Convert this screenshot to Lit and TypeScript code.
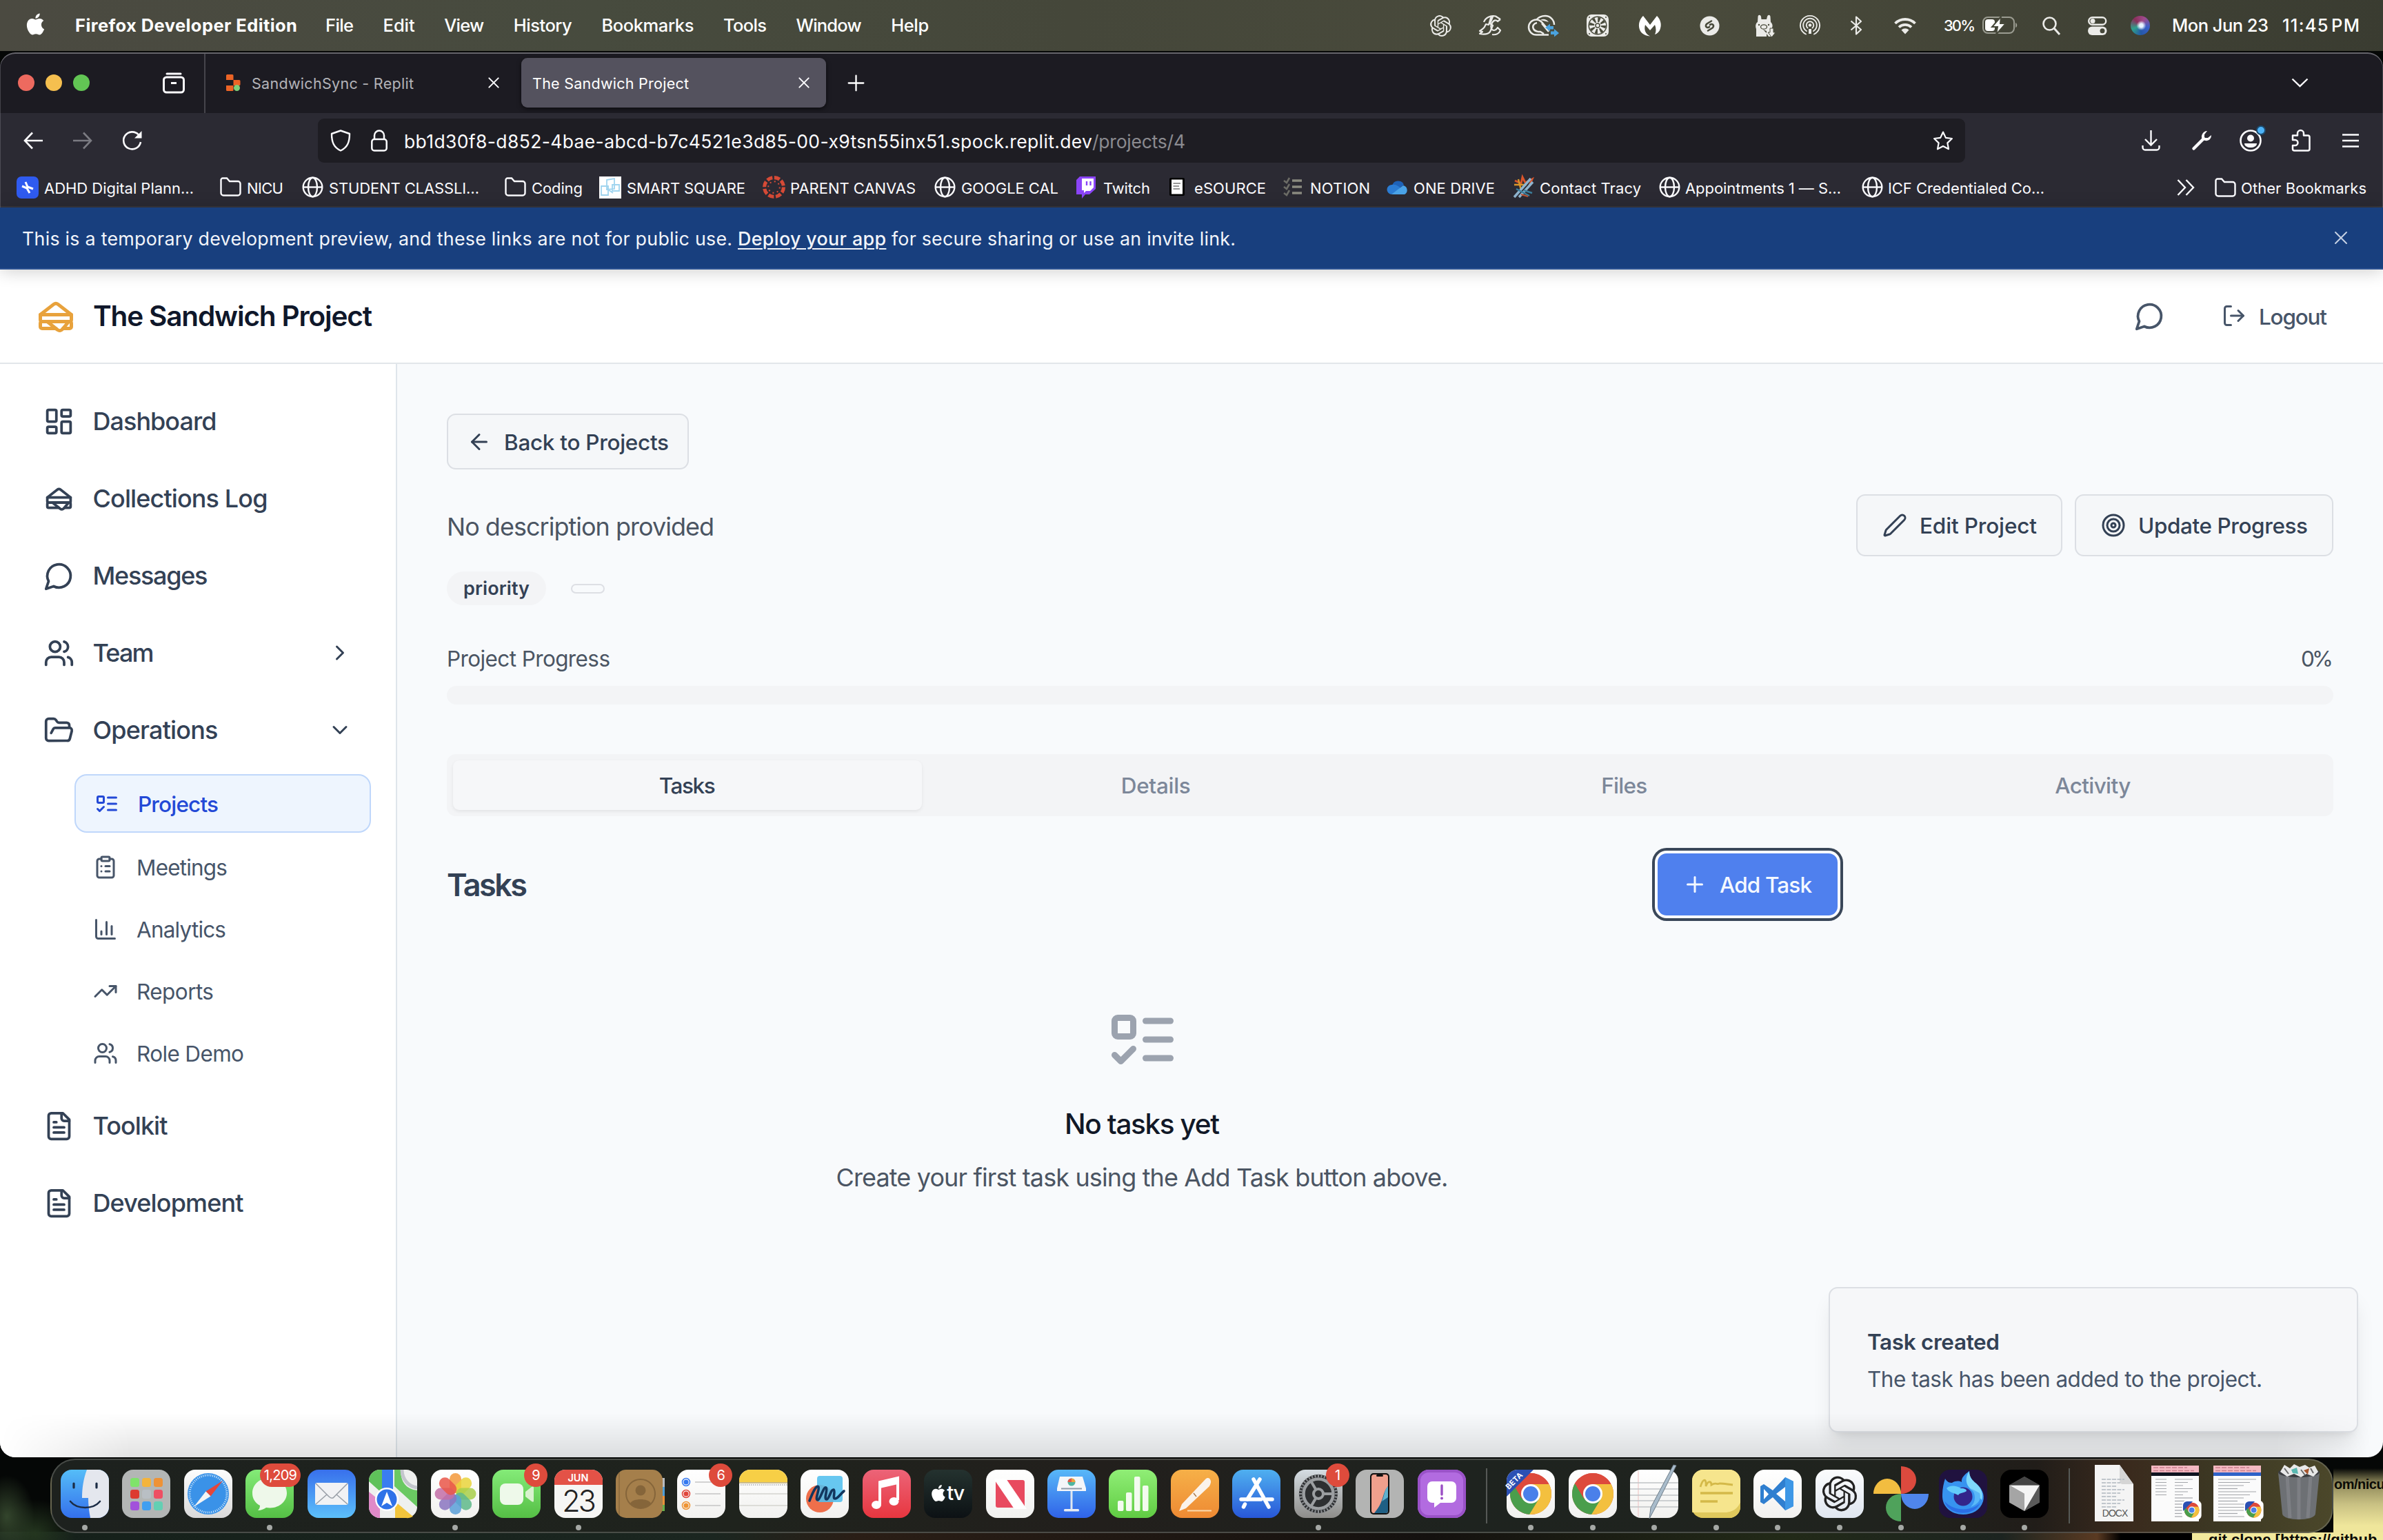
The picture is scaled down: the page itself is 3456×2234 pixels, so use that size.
import { LitElement, html, svg, css, nothing, type TemplateResult } from "lit";
import { customElement, property } from "lit/decorators.js";
import { styleMap } from "lit/directives/style-map.js";

/** One line of text whose tracking is adjusted so that it fills the given width. */
@customElement("fit-text")
class FitText extends LitElement {
  @property({ type: Number }) w = 0;
  @property() text = "";
  static styles = css`
    :host { display: inline-block; white-space: pre; flex: none; }
  `;
  render() {
    return html`<span>${this.text}</span>`;
  }
  updated() {
    const span = this.renderRoot.querySelector("span")!;
    this.style.width = `${this.w}px`;
    this.style.letterSpacing = "0px";
    const natural = span.getBoundingClientRect().width;
    const n = Math.max(1, this.text.length - 1);
    this.style.letterSpacing = `${((this.w - natural) / n).toFixed(3)}px`;
  }
}

const t = (text: string, w: number, cls = "") =>
  html`<fit-text class=${cls} .w=${w} .text=${text}></fit-text>`;

/* ---------- stroke icons ---------- */
const icon = (body: TemplateResult, size: number, cls = "", sw = 2) => html`
  <svg class="ic ${cls}" width=${size} height=${size} viewBox="0 0 24 24" fill="none"
    stroke="currentColor" stroke-width=${sw} stroke-linecap="round" stroke-linejoin="round">${body}</svg>`;

const I = {
  sandwich: svg`<path d="M3 11v3a1 1 0 0 0 1 1h16a1 1 0 0 0 1-1v-3"/><path d="M12 19H4a1 1 0 0 1-1-1v-2a1 1 0 0 1 1-1h16a1 1 0 0 1 1 1v2a1 1 0 0 1-1 1h-3.83"/><path d="m3 11 7.77-6.04a2 2 0 0 1 2.46 0L21 11H3Z"/><path d="M12.97 19.77 7 15h12.5l-3.75 4.5a2 2 0 0 1-2.78.27Z"/>`,
  dashboard: svg`<rect width="7" height="9" x="3" y="3" rx="1"/><rect width="7" height="5" x="14" y="3" rx="1"/><rect width="7" height="9" x="14" y="12" rx="1"/><rect width="7" height="5" x="3" y="16" rx="1"/>`,
  message: svg`<path d="M7.9 20A9 9 0 1 0 4 16.1L2 22Z"/>`,
  users: svg`<path d="M16 21v-2a4 4 0 0 0-4-4H6a4 4 0 0 0-4 4v2"/><circle cx="9" cy="7" r="4"/><path d="M22 21v-2a4 4 0 0 0-3-3.87"/><path d="M16 3.13a4 4 0 0 1 0 7.75"/>`,
  folderOpen: svg`<path d="m6 14 1.5-2.9A2 2 0 0 1 9.24 10H20a2 2 0 0 1 1.94 2.5l-1.54 6a2 2 0 0 1-1.95 1.5H4a2 2 0 0 1-2-2V5a2 2 0 0 1 2-2h3.9a2 2 0 0 1 1.69.9l.81 1.2a2 2 0 0 0 1.67.9H18a2 2 0 0 1 2 2v2"/>`,
  todo: svg`<rect x="3" y="5" width="6" height="6" rx="1"/><path d="m3 17 2 2 4-4"/><path d="M13 6h8"/><path d="M13 12h8"/><path d="M13 18h8"/>`,
  clipboard: svg`<rect width="8" height="4" x="8" y="2" rx="1"/><path d="M16 4h2a2 2 0 0 1 2 2v14a2 2 0 0 1-2 2H6a2 2 0 0 1-2-2V6a2 2 0 0 1 2-2h2"/><path d="M12 11h4"/><path d="M12 16h4"/><path d="M8 11h.01"/><path d="M8 16h.01"/>`,
  chart: svg`<path d="M3 3v16a2 2 0 0 0 2 2h16"/><path d="M18 17V9"/><path d="M13 17V5"/><path d="M8 17v-3"/>`,
  trend: svg`<polyline points="22 7 13.5 15.5 8.5 10.5 2 17"/><polyline points="16 7 22 7 22 13"/>`,
  file: svg`<path d="M15 2H6a2 2 0 0 0-2 2v16a2 2 0 0 0 2 2h12a2 2 0 0 0 2-2V7Z"/><path d="M14 2v4a2 2 0 0 0 2 2h4"/><path d="M10 9H8"/><path d="M16 13H8"/><path d="M16 17H8"/>`,
  logout: svg`<path d="M9 21H5a2 2 0 0 1-2-2V5a2 2 0 0 1 2-2h4"/><path d="m16 17 5-5-5-5"/><path d="M21 12H9"/>`,
  pen: svg`<path d="M21.174 6.812a1 1 0 0 0-3.986-3.987L3.842 16.174a2 2 0 0 0-.5.83l-1.321 4.352a.5.5 0 0 0 .623.622l4.353-1.32a2 2 0 0 0 .83-.497z"/>`,
  target: svg`<circle cx="12" cy="12" r="10"/><circle cx="12" cy="12" r="6"/><circle cx="12" cy="12" r="2"/>`,
  plus: svg`<path d="M5 12h14"/><path d="M12 5v14"/>`,
  left: svg`<path d="m12 19-7-7 7-7"/><path d="M19 12H5"/>`,
  chevRight: svg`<path d="m9 18 6-6-6-6"/>`,
  chevDown: svg`<path d="m6 9 6 6 6-6"/>`,
  close: svg`<path d="M4 4 20 20M20 4 4 20"/>`,
};

const box = (w: number, h: number, vb: string, body: TemplateResult, cls = "") =>
  html`<svg class="ic ${cls}" width=${w} height=${h} viewBox=${vb} fill="none">${body}</svg>`;

const OPENAI = "M22.2819 9.8211a5.9847 5.9847 0 0 0-.5157-4.9108 6.0462 6.0462 0 0 0-6.5098-2.9A6.0651 6.0651 0 0 0 4.9807 4.1818a5.9847 5.9847 0 0 0-3.9977 2.9 6.0462 6.0462 0 0 0 .7427 7.0966 5.98 5.98 0 0 0 .511 4.9107 6.051 6.051 0 0 0 6.5146 2.9001A5.9847 5.9847 0 0 0 13.2599 24a6.0557 6.0557 0 0 0 5.7718-4.2058 5.9894 5.9894 0 0 0 3.9977-2.9001 6.0557 6.0557 0 0 0-.7475-7.0729zm-9.022 12.6081a4.4755 4.4755 0 0 1-2.8764-1.0408l.1419-.0804 4.7783-2.7582a.7948.7948 0 0 0 .3927-.6813v-6.7369l2.02 1.1686a.071.071 0 0 1 .038.052v5.5826a4.504 4.504 0 0 1-4.4945 4.4944zm-9.6607-4.1254a4.4708 4.4708 0 0 1-.5346-3.0137l.142.0852 4.783 2.7582a.7712.7712 0 0 0 .7806 0l5.8428-3.3685v2.3324a.0804.0804 0 0 1-.0332.0615L9.74 19.9502a4.4992 4.4992 0 0 1-6.1408-1.6464zM2.3408 7.8956a4.485 4.485 0 0 1 2.3655-1.9728V11.6a.7664.7664 0 0 0 .3879.6765l5.8144 3.3543-2.0201 1.1685a.0757.0757 0 0 1-.071 0l-4.8303-2.7865A4.504 4.504 0 0 1 2.3408 7.872zm16.5963 3.8558L13.1038 8.364 15.1192 7.2a.0757.0757 0 0 1 .071 0l4.8303 2.7913a4.4944 4.4944 0 0 1-.6765 8.1042v-5.6772a.79.79 0 0 0-.407-.667zm2.0107-3.0231l-.142-.0852-4.7735-2.7818a.7759.7759 0 0 0-.7854 0L9.409 9.2297V6.8974a.0662.0662 0 0 1 .0284-.0615l4.8303-2.7866a4.4992 4.4992 0 0 1 6.6802 4.66zM8.3065 12.863l-2.02-1.1638a.0804.0804 0 0 1-.038-.0567V6.0742a4.4992 4.4992 0 0 1 7.3757-3.4537l-.142.0805L8.704 5.459a.7948.7948 0 0 0-.3927.6813zm1.0976-2.3654l2.602-1.4998 2.6069 1.4998v2.9994l-2.5974 1.4997-2.6067-1.4997Z";
const APPLE = "M12.152 6.896c-.948 0-2.415-1.078-3.96-1.04-2.04.027-3.91 1.183-4.961 3.014-2.117 3.675-.546 9.103 1.519 12.09 1.013 1.454 2.208 3.09 3.792 3.039 1.52-.065 2.09-.987 3.935-.987 1.831 0 2.35.987 3.96.948 1.637-.026 2.676-1.48 3.676-2.948 1.156-1.688 1.636-3.325 1.662-3.415-.039-.013-3.182-1.221-3.22-4.857-.026-3.04 2.48-4.494 2.597-4.559-1.429-2.09-3.623-2.324-4.39-2.376-2-.156-3.675 1.09-4.61 1.09zM15.53 3.83c.843-1.012 1.4-2.427 1.245-3.83-1.207.052-2.662.805-3.532 1.818-.78.896-1.454 2.338-1.273 3.714 1.338.104 2.715-.688 3.559-1.701";

/* ---------- menu bar ---------- */
const MENUS: [string, number][] = [
  ["File", 41], ["Edit", 46], ["View", 58], ["History", 85], ["Bookmarks", 134], ["Tools", 63], ["Window", 95], ["Help", 55],
];

const W = "#ebebe8";
/* [cell width, drawing] – each drawing sits at the left of its cell */
const STATUS: [number, TemplateResult][] = [
  [71, box(31, 31, "0 0 24 24", svg`<path d=${OPENAI} fill=${W}/>`)],
  [72, box(32, 30, "0 0 32 30", svg`<g stroke=${W} stroke-width="2.2" stroke-linejoin="round"><path d="M31 6 27 9C24 6 21 7 18 13C16 18 18 22 22 22C25 22 26 19 27 18L31 22C29 27 24 29 19 28M7 10C9 4 16 0 24 1.500L31 6"/><path d="M20 2 16 12 20 15 16 24C13 28 6 28 1 27L5 24 1 23C4 21 7 19 8 17L10 13 14 14 17 4Z"/></g>`)],
  [84, box(45, 32, "0 0 45 32", svg`<path d="M11 29.500A10.500 10.500 0 0 1 11 7.500C17 7.500 20 12 24 17L29 22M11 8C14 4 18 2 24 2A13 13 0 0 1 37 15M29 29.500H10M12 12C7 13 5 17 7 21C10 26 17 25 17 25L22 28M19 13 29 25" stroke=${W} stroke-width="2.500"/><path d="M17 8A9 9 0 0 1 29 11Z" fill=${W}/><path d="M24 19 31 13.500V17H36V21.500H31V24.500ZM44 27 37 32.500V29H32V24.500H37V21Z" fill="#4aa3df"/>`)],
  [76, box(32, 32, "0 0 32 32", svg`<rect width="32" height="32" rx="7" fill=${W}/><circle cx="16" cy="16" r="12.800" stroke="#484a3b" stroke-width="1.500"/><circle cx="16" cy="16" r="8.500" stroke="#484a3b" stroke-width="7" stroke-dasharray="3.100 3.577"/><circle cx="16" cy="16" r="3" stroke="#484a3b" stroke-width="1.500"/><g fill="#484a3b"><circle cx="4" cy="4" r="1"/><circle cx="28" cy="4" r="1"/><circle cx="4" cy="28" r="1"/><circle cx="28" cy="28" r="1"/></g>`)],
  [88, box(32, 31, "0 0 32 31", svg`<path d="M6 1 16 14 26 1C31 6 33 13 31 19C30 24 26 27 23 28C25 24 25 19 23 14L16 22 9 14C7 21 9 27 16 30.500C7 30 1 25 0 17C-.5 10 2 5 6 1Z" fill="#fff"/>`)],
  [81, box(29, 29, "0 0 29 29", svg`<circle cx="14.500" cy="14.500" r="14" fill=${W}/><path d="M17 7.500 10.500 11.500C6.500 15 11 18.500 14 16M12 21.500 18.500 17.500C22.500 14 18 10.500 15 13" stroke="#484a3b" stroke-width="2.600" stroke-linecap="round"/>`)],
  [64, box(29, 33, "0 0 29 33", svg`<path d="M1 32V21C-.5 17 0 13 3 11L3.500 3C4 0 7 0 8 3L8.500 7H16L17 3C18 0 21 0 21.500 3L22 11C25 14 25 17 24 19V32H19L16 28V24L11 22 16 27V32Z" fill=${W}/><ellipse cx="12" cy="18" rx="4.500" ry="3.200" stroke="#484a3b" stroke-width="1.300"/><circle cx="5" cy="15" r="1.200" fill="#484a3b"/><circle cx="19" cy="15" r="1.200" fill="#484a3b"/><path d="M21 20H26V26H29L23.500 33 18 26H21Z" fill=${W} stroke="#484a3b"/>`)],
  [73, box(30, 30, "0 0 30 30", svg`<g stroke=${W} stroke-width="1.900" stroke-linecap="round"><path d="M9 27.500A14 14 0 1 1 21 27.500M10 23A9.800 9.800 0 1 1 20 23M11.500 18.500A5.300 5.300 0 1 1 18.500 18.500"/></g><circle cx="15" cy="14.500" r="2.300" fill=${W}/><path d="M13 20H17V27H13Z" fill=${W}/>`)],
  [63, box(18, 28, "0 0 18 28", svg`<path d="M1.500 7.500 16 20 9 26.500V1.500L16 8 1.500 20.500" stroke=${W} stroke-width="2.200" stroke-linejoin="round"/>`)],
  [73, box(34, 25, "0 0 34 25", svg`<path d="M2.500 9A20.500 20.500 0 0 1 31.500 9M8 14.500A13 13 0 0 1 26 14.500" stroke=${W} stroke-width="3.800"/><path d="M11.500 18.500A8 8 0 0 1 22.500 18.500L17 24.500Z" fill=${W}/>`)],
];
const STATUS2: [number, TemplateResult][] = [
  [87, box(51, 26, "0 0 51 26", svg`<rect x="1" y="1" width="45" height="23" rx="7" stroke="#9b9c91" stroke-width="2"/><path d="M48 9C51 10 51 15 48 16Z" fill="#9b9c91"/><rect x="4" y="4" width="14" height="17" rx="4" fill="#fff"/><path d="M27 0 14 15H22L20 26 34 10H26Z" fill="#fff" stroke="#46483a" stroke-width="2"/>`)],
  [66, box(26, 27, "0 0 26 27", svg`<circle cx="10.500" cy="10.500" r="9" stroke=${W} stroke-width="2.600"/><path d="M17 17 25 26" stroke=${W} stroke-width="3"/>`)],
  [62, box(28, 27, "0 0 28 27", svg`<rect x="1.200" y="1.200" width="25" height="10.600" rx="5.300" stroke=${W} stroke-width="2.400"/><circle cx="7" cy="6.500" r="3.500" fill=${W}/><rect y="14.500" width="27.500" height="12.500" rx="6.200" fill=${W}/><circle cx="21" cy="20.700" r="3.500" fill="#46483a"/>`)],
  [60, html`<div class="siri"></div>`],
];

/* ---------- bookmarks ---------- */
const globe = box(31, 31, "0 0 31 31", svg`<g stroke="#fbfbfe" stroke-width="2.400"><circle cx="15.500" cy="15.500" r="13.800"/><ellipse cx="15.500" cy="15.500" rx="6.500" ry="13.800"/><path d="M2 15.500H29"/></g>`);
const folder = box(31, 28, "0 0 31 28", svg`<path d="M4 1.500H10L14 6H26A3.500 3.500 0 0 1 29.500 9.500V23A3.500 3.500 0 0 1 26 26.500H5A3.500 3.500 0 0 1 1.500 23V4A2.500 2.500 0 0 1 4 1.500Z" stroke="#fbfbfe" stroke-width="2.400"/>`);
const BOOKMARKS: [number, TemplateResult, string, number, number][] = [
  [295, box(32, 32, "0 0 32 32", svg`<rect width="32" height="32" rx="7" fill="#2f5bf0"/><path d="M13 8 16 15 24 18M8 14 15 17 19 24" stroke="#fff" stroke-width="3"/>`), "ADHD Digital Plann…", 217, 8],
  [119, folder, "NICU", 53, 8],
  [294, globe, "STUDENT CLASSLI…", 218, 8],
  [137, folder, "Coding", 74, 8],
  [237, box(32, 32, "0 0 32 32", svg`<rect width="32" height="32" fill="#fff"/><path d="M11 5 22 3V18L11 19ZM3 14H13V27H3ZM19 12H29V21H19ZM13 19 20 24" stroke="#9fd4ef" stroke-width="1.800"/>`), "SMART SQUARE", 172, 8],
  [249, box(33, 33, "0 0 32 32", svg`<circle cx="16" cy="16" r="13.500" stroke="#d64a36" stroke-width="5" stroke-dasharray="8 2.600"/><circle cx="16" cy="16" r="8" stroke="#d64a36" stroke-width="2" stroke-dasharray="2 4.280"/>`), "PARENT CANVAS", 182, 7],
  [206, globe, "GOOGLE CAL", 141, 8],
  [135, box(28, 32, "0 0 28 32", svg`<path d="M5 0H28V18L19 26H13L8 32V26H0V5Z" fill="#8b44f7"/><path d="M8 3H25V16L20 21H14L11 24V20H8Z" fill="#fff"/><path d="M15 7V13M20.500 7V13" stroke="#8b44f7" stroke-width="2.400"/>`), "Twitch", 68, 11],
  [165, box(22, 26, "0 0 22 26", svg`<rect width="22" height="26" rx="2" fill="#000"/><rect x="3" y="2.500" width="16" height="21" fill="#fff"/><path d="M5.500 8H16M5.500 12H14M5.500 16H15" stroke="#777" stroke-width="1.500"/>`), "eSOURCE", 104, 14],
  [150, box(28, 28, "0 0 28 28", svg`<path d="M13 5H27M13 14H27M13 23H27" stroke="#8b8b80" stroke-width="3.500"/><path d="M1 5 5 8 9 1M1 14 5 17 9 10M1 23 5 26 9 19" stroke="#6c6c66" stroke-width="2.600"/>`), "NOTION", 87, 11],
  [183, box(32, 22, "0 0 32 22", svg`<path d="M8 9A9 9 0 0 1 25 8L10 20Z" fill="#1e62b8"/><path d="M7 22A7 7 0 0 1 8 8C13 7 18 10 22 15Z" fill="#2b7cd3"/><path d="M7 22 24 9A7 7 0 0 1 26 22Z" fill="#4aa3e8"/>`), "ONE DRIVE", 118, 7],
  [212, box(31, 32, "0 0 31 32", svg`<path d="M3 6 12 10 14 1 18 9 28 4 24 13" stroke="#d9552b" stroke-width="3"/><path d="M2 12H20M8 4 12 20" stroke="#d9962b" stroke-width="2.500"/><path d="M2 30 26 3M9 30 29 8" stroke="#8fb4cf" stroke-width="3.500"/><path d="M5 18 24 28M16 20 28 24" stroke="#3d7f9c" stroke-width="2.500"/><path d="M12 26 22 29" stroke="#c25534" stroke-width="2"/>`), "Contact Tracy", 147, 8],
  [294, globe, "Appointments 1 — S…", 226, 7],
  [457, globe, "ICF Credentialed Co…", 227, 7],
];

/* ---------- sidebar ---------- */
const NAV_TOP: [keyof typeof I, string, number, string][] = [
  ["dashboard", "Dashboard", 180, ""],
  ["sandwich", "Collections Log", 254, ""],
  ["message", "Messages", 167, ""],
  ["users", "Team", 89, "chevRight"],
  ["folderOpen", "Operations", 182, "chevDown"],
];
const NAV_SUB: [keyof typeof I, string, number][] = [
  ["todo", "Projects", 117], ["clipboard", "Meetings", 132], ["chart", "Analytics", 130], ["trend", "Reports", 112], ["users", "Role Demo", 156],
];
const NAV_END: [keyof typeof I, string, number, string][] = [
  ["file", "Toolkit", 109, ""],
  ["file", "Development", 219, ""],
];

/* ---------- dock ---------- */
interface App { k: string; art?: TemplateResult; dot?: boolean; badge?: string; extra?: TemplateResult }
const art = (body: TemplateResult) => html`<svg class="art" width="70" height="70" viewBox="0 0 70 70" fill="none">${body}</svg>`;

const petals = ["#f39a3c", "#e9d43c", "#a9cf4b", "#5fb98a", "#5b9fd8", "#8a76c0", "#c46fa8", "#e9574a"];
const chrome = svg`<circle cx="35" cy="35" r="30" fill="#dd4a3c"/><path d="M35 35 9 20A30 30 0 0 0 34 65L48 43Z" fill="#4a9e4c"/><path d="M35 21H61.500A30 30 0 0 1 33 65L47 42Z" fill="#f3c03f"/><path d="M9 20A30 30 0 0 1 61.500 21H35L22 42Z" fill="#dd4a3c"/><circle cx="35" cy="35" r="14" fill="#fff"/><circle cx="35" cy="35" r="11" fill="#4a80ea"/>`;
const teeth = Array.from({ length: 36 }, (_, i) => i * 10);

const APPS_A: App[] = [
  { k: "finder", dot: true, art: svg`<path d="M38 0H54A16 16 0 0 1 70 16V54A16 16 0 0 1 54 70H43C41 60 40 50 40 41H31C31 27 33 13 38 0Z" fill="#e4e7ee"/><path d="M19 20V26M52 20V26" stroke="#1b2c45" stroke-width="3.200" stroke-linecap="round"/><path d="M14 46C24 58 47 58 57 46" stroke="#1b2c45" stroke-width="2.600" stroke-linecap="round"/>` },
  { k: "launchpad", art: svg`${["#7fe36a", "#f4b43c", "#ee9236", "#dc3b30", "#b9bfc4", "#ee4f63", "#a251db", "#3f9ff0", "#63cfb3"].map((c, i) => svg`<rect x=${12 + (i % 3) * 17} y=${12 + Math.floor(i / 3) * 17} width="13" height="13" rx="3.500" fill=${c}/>`)}` },
  { k: "safari", art: svg`<circle cx="35" cy="35" r="30" fill="#3a92e8"/><circle cx="35" cy="35" r="27" stroke="#d8ecfb" stroke-width="3" stroke-dasharray="1 1.830"/><path d="M56 16 38.500 38.500 31.500 31.500Z" fill="#e5463b"/><path d="M14 54 38.500 38.500 31.500 31.500Z" fill="#f4f4f4"/>` },
  { k: "messages", dot: true, badge: "1,209", art: svg`<path d="M35 12C20 12 10 22 10 34C10 42 14 48 21 52C21 55 20 57 18 59C23 59 27 57 30 55C48 58 60 46 60 34C60 21 49 12 35 12Z" fill="#eef8ea"/>` },
  { k: "mail", art: svg`<rect x="11" y="19" width="48" height="32" rx="3" fill="#f1f2f4"/><path d="M12 20 31 39C34 42 37 42 39 39L58 20M12 50 28 36M58 50 42 36" stroke="#9aa0a8" stroke-width="1.600"/>` },
  { k: "maps", art: svg`<rect width="70" height="70" rx="16" fill="#eef0ee"/><path d="M0 16A16 16 0 0 1 16 0H19V34L0 17Z" fill="#5fc15a"/><path d="M37 0H46C46 18 54 28 70 30V54L37 24Z" fill="#6ac962"/><path d="M19 0H35V36H19Z" fill="#3a7df0"/><path d="M0 32 16 45V70A16 16 0 0 1 0 54Z" fill="#e08ac8"/><path d="M38 70V46L64 68A16 16 0 0 1 54 70Z" fill="#f2c53c"/><path d="M48 0C48 14 58 25 70 26" stroke="#c3c6cc" stroke-width="5"/><circle cx="26" cy="43" r="17" fill="#fff"/><circle cx="26" cy="43" r="14.500" fill="#2f72e8"/><path d="M26 32 34 53 26 48 18 53Z" fill="#fff"/>` },
  { k: "white", dot: true, art: svg`${petals.map((c, i) => svg`<rect x="27" y="5" width="17" height="29" rx="8.500" fill=${c} fill-opacity=".86" transform=${`rotate(${i * 45} 35.500 35)`}/>`)}` },
  { k: "facetime", badge: "9", art: svg`<rect x="11" y="20" width="34" height="31" rx="8" fill="#eef9ea"/><path d="M48 32 57 25C59 24 60 24 60 26V45C60 47 59 47 57 46L48 39Z" fill="#d9f2cf"/>` },
  { k: "calendar", dot: true, art: svg`<path d="M0 22V16A16 16 0 0 1 16 0H54A16 16 0 0 1 70 16V22Z" fill="#e35247"/>`, extra: html`<div class="cal"><span class="mon">JUN</span><span class="day">23</span></div>` },
  { k: "contacts", art: svg`<path d="M66 12H71V25H66Z" fill="#b9bcc0"/><path d="M66 25H71V38H66Z" fill="#4f9fd8"/><path d="M66 38H71V51H66Z" fill="#e8913a"/><path d="M66 51H71V60H66Z" fill="#67b04b"/><rect width="68" height="70" rx="15" fill="#a57f4b"/><path d="M5 4V66" stroke="#8b6a3c" stroke-width="1.500"/><circle cx="36" cy="35" r="21" stroke="#85653a" stroke-width="2"/><circle cx="36" cy="30" r="7.500" fill="#85653a"/><path d="M21 49C24 41 48 41 51 49A21 21 0 0 1 21 49Z" fill="#85653a"/>` },
  { k: "white", badge: "6", art: svg`${["#3478f0", "#e0463b", "#ee9434"].map((c, i) => svg`<circle cx="13" cy=${18 + i * 17} r="5.500" stroke=${c} stroke-width="1.500"/><circle cx="13" cy=${18 + i * 17} r="3.600" fill=${c}/><path d=${`M26 ${18 + i * 17}H63`} stroke="#c5c5c5" stroke-width="1.500"/>`)}` },
  { k: "white", art: svg`<path d="M0 18V16A16 16 0 0 1 16 0H54A16 16 0 0 1 70 16V18Z" fill="#f7cf46"/><path d="M0 19H70" stroke="#b9a468" stroke-width="1.500"/><path d="M2 22H70" stroke="#aaa" stroke-width="1.500" stroke-dasharray="1.500 1.500"/><path d="M0 35H70M0 52H70" stroke="#d3d3cf" stroke-width="1.500"/>` },
  { k: "white", art: svg`<circle cx="28" cy="42" r="20" fill="#ee6f4b"/><rect x="24" y="9" width="37" height="38" rx="4" fill="#52bfee" fill-opacity=".88"/><path d="M13 45C18 32 23 22 26 25C28 28 20 44 25 44C29 43 33 24 37 26C40 28 33 43 38 43C42 42 44 28 48 29C51 31 46 42 50 42C54 42 57 36 63 31" stroke="#12365e" stroke-width="3.600" stroke-linecap="round"/>` },
  { k: "music", art: svg`<path d="M25 50V18L51 12V44" stroke="#fff" stroke-width="4"/><path d="M25 18 51 12V21L25 27Z" fill="#fff"/><ellipse cx="20" cy="51" rx="7" ry="6" fill="#fff"/><ellipse cx="45.500" cy="46" rx="7" ry="6" fill="#fff"/>` },
  { k: "tv", art: svg`<path d=${APPLE} fill="#fff" transform="translate(9 22) scale(1)"/>`, extra: html`<span class="tvt">tv</span>` },
  { k: "white", art: svg`<rect x="14" y="15" width="42" height="40" rx="3" fill="#e84a5f"/><path d="M11 13H29L59 57H41Z" fill="#fff"/>` },
  { k: "keynote", art: svg`<path d="M18 10H51L56 27V31H14V27Z" fill="#f4f6f9"/><path d="M20 27.500H50" stroke="#8e9aa8" stroke-width="2"/><circle cx="35" cy="18" r="5.500" fill="#4fb6a0"/><path d="M35 18V12.500A5.500 5.500 0 0 1 40.500 18Z" fill="#f0a13c"/><path d="M35 18H29.500A5.500 5.500 0 0 1 35 12.500Z" fill="#e2574b"/><path d="M35 31V59" stroke="#dfe7f0" stroke-width="3"/><rect x="24" y="57" width="22" height="3.500" rx="1.500" fill="#e8edf3"/>` },
  { k: "numbers", art: svg`<g fill="#f3fbef"><rect x="13" y="45" width="8.500" height="15" rx="2"/><rect x="25" y="33" width="8.500" height="27" rx="2"/><rect x="37" y="10" width="8.500" height="50" rx="2"/><rect x="49" y="23" width="8.500" height="37" rx="2"/></g>` },
  { k: "pages", art: svg`<path d="M57 14C59 17 58 20 56 24L22 56 12 60 16 50 50 14C53 11 56 12 57 14Z" fill="#fbf3ea"/><path d="M33 34 37 39" stroke="#a87a4d" stroke-width="1.500"/><path d="M24 59.500H59" stroke="#f9d9ae" stroke-width="2"/>` },
  { k: "store", art: svg`<g stroke="#fff" stroke-width="5.500" stroke-linecap="round"><path d="M31 14 53 54"/><path d="M40 14 22 43"/><path d="M13 43H42M50 43H58"/><path d="M18.500 50 16.500 54"/></g>` },
  { k: "settings", dot: true, badge: "1", art: svg`<circle cx="35" cy="35" r="28" fill="#2d2f31"/>${teeth.map((a) => svg`<path d="M35 6.500V11" stroke="#8d9094" stroke-width="2" transform=${`rotate(${a} 35 35)`}/>`)}<circle cx="35" cy="35" r="21.500" stroke="#9b9ea1" stroke-width="4.500"/><circle cx="35" cy="35" r="7" stroke="#9b9ea1" stroke-width="4"/><path d="M42 35H56M31.500 29 24.500 17M31.500 41 24.500 53" stroke="#9b9ea1" stroke-width="4"/>` },
  { k: "mirror", art: svg`<rect x="21" y="5" width="28" height="60" rx="5" fill="#111"/><rect x="23" y="7" width="24" height="56" rx="3.500" fill="#f0a08d"/><path d="M47 24C38 34 42 46 27 63H43.500A3.500 3.500 0 0 0 47 59.500Z" fill="#1f5f84"/><path d="M47 24C41 30 42 38 38 46L47 40Z" fill="#5fb2cf"/><rect x="30" y="7" width="10" height="3" rx="1.500" fill="#111"/>` },
  { k: "feedback", art: svg`<path d="M21 17H49A7 7 0 0 1 56 24V41A7 7 0 0 1 49 48H33L24 55V48H21A7 7 0 0 1 14 41V24A7 7 0 0 1 21 17Z" fill="#fff"/><path d="M35 23V36" stroke="#9a4fc4" stroke-width="3.400" stroke-linecap="round"/><circle cx="35" cy="41.500" r="2" fill="#9a4fc4"/>` },
];
const APPS_B: App[] = [
  { k: "white", dot: true, art: svg`${chrome}<path d="M16 0H39L0 39V16A16 16 0 0 1 16 0Z" fill="#2b50b4"/>`, extra: html`<span class="beta">BETA</span>` },
  { k: "white", dot: true, art: chrome },
  { k: "white", dot: true, art: svg`<path d="M12 2V68" stroke="#f0c9c9" stroke-width="1.200"/><path d="M0 19H70M0 28H70M0 37H70M0 45H70M0 54H70" stroke="#c0c3c6" stroke-width="1.300"/><path d="M63-7 67-6 35 58 28 71 30 55Z" fill="#a9bccb" stroke="#6d7c88" stroke-width="1"/>` },
  { k: "stickies", dot: true, art: svg`<path d="M0 16A16 16 0 0 1 16 0H54A16 16 0 0 1 70 16V48C66 56 60 61 50 62H0Z" fill="#f6e58d"/><path d="M0 58V62H50C60 61 66 56 70 48V54A16 16 0 0 1 54 70H16A16 16 0 0 1 0 58Z" fill="#dfc85c"/><path d="M12 25C16 12 21 12 20 24C24 14 28 18 28 22C34 18 36 22 40 20C46 20 50 21 59 22" stroke="#d4b949" stroke-width="2.800"/><path d="M12 34H59M12 46H37" stroke="#d4b949" stroke-width="3.500"/>` },
  { k: "white", dot: true, art: svg`<path d="M46 11 58 17V53L46 59 28 40 15 50 10 47V24L15 21 28 30Z" fill="#2f7fd0"/><path d="M46 11 58 17V53L46 59Z" fill="#3d97e6"/><path d="M46 25V46L33 35Z" fill="#fff"/><path d="M15 28V43L22 35.500Z" fill="#fff"/>` },
  { k: "gpt", dot: true, art: svg`<path d=${OPENAI} fill="#222" transform="translate(9.500 9.500) scale(2.120)"/>` },
  { k: "bare", dot: true, art: svg`<path d="M35 35V-5A22 20 0 0 1 35 35Z" fill="#dc4a3e"/><path d="M35 35H-5A20 22 0 0 1 35 35Z" fill="#f2bd40"/><path d="M35 35H75A20 22 0 0 1 35 35Z" fill="#4f86ec"/><path d="M35 35V75A22 20 0 0 1 35 35Z" fill="#4fa25b"/>` },
  { k: "fox", dot: true, art: svg`<path d="M9 13C12 18 15 19 19 19C24 16 29 16 33 18C32 12 37 7 44 2C44 11 48 15 54 20C62 27 67 36 64 46C60 59 48 65 35 65C18 65 4 54 5 36C5 27 7 19 9 13Z" fill="#3793f0"/><path d="M44 2C44 11 48 15 54 20C61 26 65 35 62 44C57 38 52 33 46 28C39 22 37 12 44 2Z" fill="#7fd9fb"/><circle cx="35" cy="39" r="13.500" fill="#33258a"/><path d="M11 27C17 22 25 23 32 27C38 27 40 29 40 31C36 34 30 33 28 37C23 34 14 33 11 27Z" fill="#63cbfb"/><path d="M46 27C54 34 54 47 46 54C58 50 62 42 59 34Z" fill="#5ab8f8"/><path d="M8 46C14 66 50 70 60 48C48 60 24 62 8 46Z" fill="#2b6ee6"/>` },
  { k: "cursor", dot: true, art: svg`<path d="M35 10 57 22.500V47.500L35 60 13 47.500V22.500Z" fill="#777"/><path d="M13 22.500H57L35 60V35Z" fill="#f5f5f5"/><path d="M35 10 57 22.500H13Z" fill="#444"/><path d="M13 22.500 35 35V60L13 47.500Z" fill="#a5a5a5"/><path d="M57 22.500 35 60 57 47.500Z" fill="#5a5a5a"/>` },
];
const thumb = (dark: boolean) => svg`<rect x="0" y="-6" width="69" height="81" fill="#fbfbfb"/><rect x="0" y="-6" width="69" height="10" fill="#f4b9c2"/><path d="M3 -3H52M3 1.500H62" stroke="#c9808e" stroke-width="1.600" stroke-dasharray="7 2"/><rect x="0" y="4" width="69" height="5" fill=${dark ? "#0f1320" : "#2f62c8"}/>${Array.from({ length: 13 }, (_, i) => svg`<path d=${dark ? `M34 ${14 + i * 4.500}H${60 - (i % 3) * 7}M6 ${14 + i * 4.500}H${i < 6 ? 22 : 6}` : `M7 ${14 + i * 4.500}H${62 - (i % 4) * 9}`} stroke="#a3a6aa" stroke-width="1.200"/>`)}<g transform="translate(46 46) scale(.36)"><rect x="-4" y="-4" width="78" height="78" rx="18" fill="#fff"/>${chrome}<path d="M16 0H39L0 39V16A16 16 0 0 1 16 0Z" fill="#2b50b4"/></g>`;
const APPS_C: App[] = [
  { k: "bare", art: svg`<path d="M7-7H43L63 21V75H7Z" fill="#f4f4f4"/><path d="M43-7 63 21H48C44 21 43 19 43 14Z" fill="#d5d5d5"/>${Array.from({ length: 9 }, (_, i) => svg`<path d=${`M17 ${14 + i * 5}H${50 - (i % 3) * 6}`} stroke="#aeb6bf" stroke-width="1.500" stroke-dasharray="6 1.500"/>`)}`, extra: html`<span class="docx">DOCX</span>` },
  { k: "bare", art: thumb(true) },
  { k: "bare", art: thumb(false) },
  { k: "bare", art: svg`<path d="M5 4 11 64C12 75 58 75 59 64L65 4Z" fill="#6d7074"/><path d="M18 8 22 70M35 9V72M52 8 48 70" stroke="#8a8d91" stroke-width="5" opacity=".55"/><ellipse cx="35" cy="4" rx="30" ry="7" fill="#3c3e41"/><path d="M8 3 14-7 22-2 28-8 36-4 44-7 50-3 58-6 63 3 56 10 46 6 38 11 28 6 18 10Z" fill="#e8e8e8"/><path d="M24 0 32-3 34 6 26 5Z" fill="#58b7b0"/><path d="M42 1 50-2 48 7Z" fill="#a5552d"/><path d="M14-2 20 6M38 0 44 8M52-2 56 5" stroke="#6a6a6a" stroke-width="2"/>` },
];

const app = (a: App) => html`
  <div class="cell">
    <div class="tile ${a.k}">
      ${a.art ? art(a.art) : nothing}${a.extra ?? nothing}
      ${a.badge ? html`<span class="badge">${a.badge}</span>` : nothing}
    </div>
    <i class="dot ${a.dot ? "on" : ""}"></i>
  </div>`;

@customElement("app-root")
class AppRoot extends LitElement {
  static styles = css`
    :host {
      display: flex; flex-direction: column; width: 3456px; height: 2234px; overflow: hidden; position: relative;
      font-family: Inter, "Liberation Sans", sans-serif; color: #fff;
      background:
        radial-gradient(ellipse 40px 60px at 10px 2200px, #33452c 0, transparent 100%),
        radial-gradient(ellipse 60px 50px at 50px 2225px, #24361f 0, transparent 100%),
        linear-gradient(90deg, #15201a 0, #1b2620 30%, #2a1e16 36%, #14110f 60%, #222a18 75%, #1c2420 84%, #5a3a22 88%, #000 89%) 0 2222px / 3456px 12px no-repeat,
        #050706;
    }
    .ic { flex: none; display: block; overflow: visible; }
    fit-text { line-height: 1.2; padding-top: 2px; }

    /* menu bar */
    .menubar { height: 74px; flex: none; display: flex; align-items: center; font-size: 25.500px; font-weight: 500;
      background: linear-gradient(90deg, #4b4a41 0, #474b3e 25%, #45473a 45%, #4a4b3c 70%, #3a3c31 100%); box-sizing: border-box; }
    .menubar fit-text { padding-top: 0; }
    .apple { margin: 0 42px 4px 36px; }
    .appname { font-weight: 700; margin-right: 41px; }
    .menus { display: flex; gap: 42.600px; flex: 1; }
    .status { display: flex; align-items: center; }
    .scell { flex: none; display: flex; align-items: center; }
    .pct { font-size: 22px; margin-right: 10px; }
    .siri { width: 28px; height: 28px; border-radius: 50%; background: radial-gradient(circle at 55% 50%, #e8f4ff 0 12%, transparent 34%), conic-gradient(from 30deg, #a04a8c, #3a5fc8, #2458a8, #2fa08c, #8a2f5a, #a04a8c); }
    .clock { margin-right: 34px; display: flex; gap: 20px; }

    /* window */
    .window { margin-top: 2px; height: 2038px; flex: none; border-radius: 22px; overflow: hidden; display: flex; flex-direction: column; position: relative; background: #1c1b22; }
    .window::after { content: ""; position: absolute; inset: 0; border-radius: 22px; pointer-events: none;
      box-shadow: inset 0 2px 0 #66656c, inset 1px 0 0 rgba(140, 140, 150, .35), inset -1px 0 0 rgba(140, 140, 150, .35); height: 315px; border-bottom-left-radius: 0; border-bottom-right-radius: 0; }
    .tabs { height: 88px; flex: none; display: flex; align-items: center; font-size: 21.500px; }
    .tabs fit-text, .marks fit-text { padding-top: 3px; }
    .lights { display: flex; gap: 16px; margin-left: 26px; width: 210px; }
    .lights i { width: 24px; height: 24px; border-radius: 50%; }
    .red { background: #ed6a5f; } .amber { background: #f5bf4f; } .green { background: #62c554; }
    .view { margin-left: 0; }
    .sep { width: 2px; height: 88px; background: #46454c; margin-left: 28px; }
    .tab { width: 442px; height: 72px; display: flex; align-items: center; box-sizing: border-box; border-radius: 9px; flex: none; }
    .tab.idle { color: #b3b3b8; margin-left: 8px; padding-left: 22px; margin-right: 8px; }
    .tab.idle .ic.fav { margin-right: 16px; }
    .tab.on { background: #54525e; padding-left: 16px; box-shadow: 0 2px 6px rgba(0, 0, 0, .6); }
    .tab .x { margin-left: auto; margin-right: 22px; color: #fbfbfe; }
    .newtab { margin-left: 25px; }
    .tabs .more { margin-left: auto; margin-right: 108px; }
    .chrome { background: #2b2a33; height: 137px; flex: none; display: flex; flex-direction: column; box-sizing: border-box; border-bottom: 2px solid #37363c; }
    .bar { height: 80px; flex: none; display: flex; align-items: center; }
    .url { width: 2389px; height: 64px; flex: none; border-radius: 9px; background: #1e1d23; display: flex; align-items: center; box-sizing: border-box; font-size: 26.500px; color: #fbfbfe; }
    .url fit-text { padding-top: 3px; }
    .url .path { color: #8b8b90; }
    .url .star { margin-left: auto; margin-right: 16px; }
    .navs { display: flex; align-items: center; width: 461px; flex: none; box-sizing: border-box; padding-left: 34px; }
    .tools { display: flex; align-items: center; flex: 1; justify-content: flex-end; padding-right: 34px; }
    .marks { display: flex; align-items: center; height: 59px; padding-left: 24px; font-size: 22px; color: #fbfbfe; }
    .mark { flex: none; display: flex; align-items: center; }
    .other { margin-left: 29px; margin-right: 7px; }

    /* preview banner */
    .banner { height: 90px; flex: none; box-sizing: border-box; background: #183f7e; border-bottom: 2px solid #2c5292; display: flex; align-items: center; padding: 0 49px 0 32px; font-size: 26.800px; color: #f2f5fa; justify-content: space-between; position: relative; z-index: 1; box-shadow: 0 2px 24px rgba(0, 0, 0, .2); }
    .banner .msg { display: flex; }
    .banner .link { text-decoration: underline; text-underline-offset: 4px; text-decoration-thickness: 2px; font-weight: 500; margin: 0 8px; }
    .banner .ic { color: #c6d1e3; }

    /* page */
    .top { height: 137px; flex: none; box-sizing: border-box; background: #fff; border-bottom: 2px solid #e2e6ea; display: flex; align-items: center; padding: 0 81px 0 51px; color: #475569; }
    .top .logo { color: #e8a23c; margin-right: 24px; }
    .top .title { color: #0f172a; font-weight: 600; font-size: 40.500px; flex: 1 0 auto; }
    .top .out { display: flex; align-items: center; font-size: 31.500px; font-weight: 500; margin-left: 82px; gap: 18px; }
    .page { display: flex; flex: 1; background: #f8fafc; min-height: 0; }
    .side { width: 576px; flex: none; box-sizing: border-box; background: #fff; border-right: 2px solid #dfe5eb; padding-top: 27px; color: #334155; }
    .nav { height: 112px; display: flex; align-items: center; padding-left: 63px; font-size: 36px; font-weight: 500; }
    .nav .ic.lead { margin-right: 26.500px; }
    .nav .ic.chev { margin-left: auto; margin-right: 63px; }
    .sub { padding: 8px 36px 4px 108px; }
    .snav { height: 90px; display: flex; align-items: center; padding-left: 27px; color: #475569; font-size: 31.500px; }
    .snav .ic { margin-right: 27px; }
    .snav.on { height: 85px; box-sizing: border-box; border: 2px solid #bfd7fb; border-radius: 18px; background: #eef5fe; color: #2349d6; margin-bottom: 5px; font-weight: 500; }

    .main { flex: 1; padding: 72px 72px 0 72px; color: #374151; display: flex; flex-direction: column; }
    .btn { display: flex; align-items: center; box-sizing: border-box; border: 2px solid #dcdfe4; border-radius: 13px; background: #f5f7f9; height: 90px; font-size: 31.500px; font-weight: 500; color: #334155; flex: none; }
    .btn.back { width: 351px; height: 81px; padding-left: 27px; gap: 18px; }
    .btn.edit { width: 299px; padding-left: 36px; gap: 18px; }
    .btn.update { width: 375px; padding-left: 36px; gap: 18px; }
    .head { display: flex; justify-content: space-between; align-items: flex-start; margin-top: 36px; }
    .desc { font-size: 36px; color: #4b5563; height: 54px; display: flex; align-items: center; margin-top: 20px; }
    .acts { display: flex; gap: 18px; }
    .pills { display: flex; align-items: center; gap: 36px; margin-top: 38px; height: 49px; }
    .pill { height: 49px; width: 144px; display: flex; align-items: center; justify-content: center; border-radius: 25px; background: #f3f4f6; font-size: 27px; font-weight: 600; color: #334155; }
    .pill.empty { width: 49px; height: 14px; box-sizing: border-box; border: 2px solid #dddfe4; background: none; border-radius: 7px; }
    .prow { display: flex; justify-content: space-between; align-items: center; height: 45px; margin-top: 54px; font-size: 31.500px; color: #4b5563; }
    .track { height: 27px; border-radius: 14px; background: #f3f4f6; margin-top: 18px; flex: none; }
    .tablist { height: 90px; flex: none; box-sizing: border-box; padding: 9px; display: grid; grid-template-columns: repeat(4, 1fr); background: #f3f4f6; border-radius: 13px; margin-top: 72px; font-size: 31.500px; font-weight: 500; color: #7c8799; }
    .tl { display: flex; align-items: center; justify-content: center; border-radius: 9px; }
    .tl.on { background: #f6f7f9; color: #334155; box-shadow: 0 2px 5px rgba(0, 0, 0, .07); }
    .tasks { width: 2017px; display: flex; justify-content: space-between; align-items: center; height: 90px; margin-top: 54px; flex: none; }
    .tasks .h { font-size: 45px; font-weight: 600; color: #334155; }
    .add { width: 261px; height: 90px; box-sizing: border-box; border-radius: 13px; background: #4f80ee; color: #f4f8ff; font-size: 31.500px; font-weight: 500; display: flex; align-items: center; padding-left: 36px; gap: 18px; box-shadow: 0 0 0 4px #fdfdfe, 0 0 0 8px #3a4759; }
    .empty-state { width: 2017px; display: flex; flex-direction: column; align-items: center; padding-top: 126px; }
    .empty-state .ic { color: #9ca3af; }
    .empty-state .t1 { font-size: 40.500px; font-weight: 500; color: #111827; height: 63px; margin-top: 37px; display: flex; align-items: center; }
    .empty-state .t2 { font-size: 36px; color: #4b5563; height: 54px; margin-top: 19px; display: flex; align-items: center; }

    .toast { position: absolute; right: 36px; bottom: 36px; width: 768px; height: 211px; box-sizing: border-box; border: 2px solid #dcdfe4; border-radius: 13px; background: #f6f7f9; padding: 0 0 0 54px; display: flex; flex-direction: column; justify-content: center; gap: 14px; font-size: 31.500px; color: #475569; box-shadow: 0 20px 30px -6px rgba(0, 0, 0, .1), 0 8px 12px -8px rgba(0, 0, 0, .1); }
    .toast .tt { font-weight: 600; color: #334155; }
    .dockshade { position: absolute; left: 0; right: 0; bottom: 0; height: 64px; pointer-events: none;
      background: linear-gradient(180deg, transparent, rgba(0, 0, 0, .115)); -webkit-mask-image: linear-gradient(90deg, transparent 0, #000 190px, #000 3300px, transparent 3440px); mask-image: linear-gradient(90deg, transparent 0, #000 190px, #000 3300px, transparent 3440px); }

    /* desktop note behind the dock */
    .note { position: absolute; left: 3384px; top: 2130px; width: 72px; height: 104px; overflow: hidden; background: linear-gradient(180deg, transparent 0, #8d8759 20%, #c9c183 50%, #efe69b 80%); color: #0b0b06; font: 700 20px/1 "Liberation Sans", sans-serif; }
    .note span { position: absolute; left: 1px; top: 13px; white-space: nowrap; letter-spacing: -.5px; }
    .note2 { position: absolute; left: 3179px; top: 2223px; width: 277px; height: 11px; overflow: hidden; background: #f1e89c; color: #0b0b06; font: 700 22px/1 "Liberation Sans", sans-serif; }
    .note2 span { position: absolute; left: 24px; top: 0; white-space: nowrap; }

    /* dock */
    .dock { width: 3311px; height: 108px; flex: none; margin: 2px 0 0 73px; box-sizing: border-box; border-radius: 36px; position: relative;
      background: linear-gradient(90deg, #1d211e 0, #1f231d 30%, #221f1c 46%, #1e231f 62%, #20231e 80%, #211d19 87%, #3a2a1d 91%, #3c3823 95%, #4b472a 100%);
      border: 2px solid rgba(150, 152, 148, .36); display: flex; padding-left: 3.300px; }
    .cell { width: 89.450px; flex: none; display: flex; flex-direction: column; align-items: center; padding-top: 14px; }
    .tile { width: 70px; height: 70px; border-radius: 16px; position: relative; }
    .art { position: absolute; inset: 0; overflow: visible; }
    .dot { width: 8px; height: 8px; border-radius: 50%; margin-top: 10px; }
    .dot.on { background: #a5a8a5; }
    .dsep { width: 2px; height: 80px; margin: 12px 19.200px 0; background: #565956; flex: none; }
    .badge { position: absolute; right: -10px; top: -9px; height: 34px; min-width: 34px; padding: 0 6px; box-sizing: border-box; border-radius: 17px; background: #de4b3c; color: #fff; font-size: 20px; line-height: 34px; text-align: center; letter-spacing: -.7px; }
    .finder { background: linear-gradient(180deg, #55bdf8, #3470ec); }
    .launchpad { background: #b3b6b5; }
    .safari { background: linear-gradient(180deg, #fdfdfd, #d9d9d9); }
    .messages, .facetime { background: linear-gradient(180deg, #84eb78, #55bf45); }
    .mail { background: linear-gradient(180deg, #3870ec, #5cc0fa); }
    .white { background: linear-gradient(180deg, #fff, #f1f1ef); }
    .calendar { background: #f6f6f4; }
    .music { background: linear-gradient(180deg, #ec6478, #e8363f); }
    .tv { background: linear-gradient(180deg, #24322f, #0c1114); }
    .keynote { background: linear-gradient(180deg, #58b8f8, #2f62e8); }
    .numbers { background: linear-gradient(180deg, #90ee76, #60cc43); }
    .pages { background: linear-gradient(180deg, #f6b048, #ee8a33); }
    .store { background: linear-gradient(180deg, #4fb0f0, #2857d8); }
    .settings { background: linear-gradient(180deg, #d5dde3, #8e8d8a); }
    .mirror { background: #b3b4b3; }
    .feedback { background: #b26be0; box-shadow: inset 0 0 0 4px #9a52c8; }
    .stickies { background: #dfc85c; }
    .gpt { background: linear-gradient(180deg, #fbfcfd, #dfe6ef); }
    .fox { background: #20123f; }
    .cursor { background: #000; }
    .cal { position: absolute; inset: 0; display: flex; flex-direction: column; align-items: center; }
    .mon { font-size: 14.500px; font-weight: 600; line-height: 23px; color: #fff; }
    .day { font-size: 43px; font-weight: 300; line-height: 44px; color: #222; letter-spacing: -3px; }
    .tvt { position: absolute; left: 33px; top: 17px; font-size: 29px; font-weight: 500; line-height: 34px; letter-spacing: -1px; }
    .beta { position: absolute; left: -4px; top: 9px; font-size: 11px; font-weight: 700; line-height: 14px; transform: rotate(-45deg); letter-spacing: .3px; }
    .docx { position: absolute; left: 18px; top: 55px; font: 400 14px/16px "Liberation Sans", sans-serif; color: #555; letter-spacing: -1px; }
  `;

  private cells(items: [number, TemplateResult][]) {
    return items.map(([w, b]) => html`<div class="scell" style=${styleMap({ width: `${w}px` })}>${b}</div>`);
  }

  render() {
    return html`
      <div class="note"><span>om/nicu</span></div>
      <div class="note2"><span>git clone [https://github</span></div>
      <div class="menubar">
        ${box(31, 32, "0 0 24 24", svg`<path d=${APPLE} fill="#fff"/>`, "apple")}
        ${t("Firefox Developer Edition", 322, "appname")}
        <div class="menus">${MENUS.map(([m, w]) => t(m, w))}</div>
        <div class="status">
          ${this.cells(STATUS)}
          ${t("30%", 46, "pct")}
          ${this.cells(STATUS2)}
        </div>
        <div class="clock">${t("Mon Jun 23", 140)}${t("11:45\u200aPM", 112)}</div>
      </div>

      <div class="window">
        <div class="tabs">
          <div class="lights"><i class="red"></i><i class="amber"></i><i class="green"></i></div>
          ${box(32, 32, "0 0 32 32", svg`<path d="M6 3H26" stroke="#fbfbfe" stroke-width="3" stroke-linecap="round"/><rect x="1.500" y="8" width="29" height="22" rx="4" stroke="#fbfbfe" stroke-width="3"/><rect x="12" y="15" width="8" height="3" fill="#fbfbfe"/>`, "view")}
          <div class="sep"></div>
          <div class="tab idle">
            ${box(21, 24, "0 0 21 24", svg`<path d="M0 1.500A1.500 1.500 0 0 1 1.500 0H9A1.500 1.500 0 0 1 10.500 1.500V8H0ZM10.500 8H19A1.500 1.500 0 0 1 20.500 9.500V14.500A1.500 1.500 0 0 1 19 16H10.500ZM0 16H10.500V22.500A1.500 1.500 0 0 1 9 24H1.500A1.500 1.500 0 0 1 0 22.500Z" fill="#ec6426"/><circle cx="15.500" cy="19.500" r="4.500" fill="#7dd07a"/>`, "fav")}
            ${t("SandwichSync - Replit", 235)}
            ${icon(I.close, 20, "x", 2.4)}
          </div>
          <div class="tab on">
            ${t("The Sandwich Project", 227)}
            ${icon(I.close, 20, "x", 2.4)}
          </div>
          ${icon(I.plus, 37, "newtab", 1.5)}
          ${box(25, 14, "0 0 25 14", svg`<path d="M1.500 1.500 12.500 12 23.500 1.500" stroke="#fbfbfe" stroke-width="2.400"/>`, "more")}
        </div>
        <div class="chrome">
          <div class="bar">
            <div class="navs">
              ${this.cells([
                [72, box(28, 26, "0 0 28 26", svg`<path d="M13 1.500 2 13 13 24.500M2.500 13H28" stroke="#fbfbfe" stroke-width="2.600"/>`)],
                [71, box(28, 26, "0 0 28 26", svg`<path d="M15 1.500 26 13 15 24.500M25.500 13H0" stroke="#7b7b82" stroke-width="2.600"/>`)],
                [60, box(30, 30, "0 0 30 30", svg`<path d="M27 17A12.500 12.500 0 1 1 24 6.500" stroke="#fbfbfe" stroke-width="2.600"/><path d="M28.500 1V11.500H18Z" fill="#fbfbfe"/>`)],
              ])}
            </div>
            <div class="url">
              ${this.cells([
                [18, html``],
                [59, box(30, 32, "0 0 30 32", svg`<path d="M15 1.500 28 6C28 18 25 26 15 30.500C5 26 2 18 2 6Z" stroke="#fbfbfe" stroke-width="2.400" stroke-linejoin="round"/>`)],
                [48, box(24, 32, "0 0 24 32", svg`<rect x="1.300" y="14" width="21.400" height="16.500" rx="3.500" stroke="#fbfbfe" stroke-width="2.500"/><path d="M5 14V8.500A7 7 0 0 1 19 8.500V14" stroke="#fbfbfe" stroke-width="2.500"/>`)],
              ])}
              ${t("bb1d30f8-d852-4bae-abcd-b7c4521e3d85-00-x9tsn55inx51.spock.replit.dev", 998)}
              ${t("/projects/4", 135, "path")}
              ${box(32, 31, "0 0 24 24", svg`<path d="m12 2 3 6.400 7 .9-5.100 4.900 1.300 6.900L12 17.800 5.800 21.100l1.300-6.900L2 9.300l7-.9Z" stroke="#fbfbfe" stroke-width="1.700" stroke-linejoin="round"/>`, "star")}
            </div>
            <div class="tools">
              ${this.cells([
                [73, box(27, 30, "0 0 27 30", svg`<path d="M13.500 0V21M5 13 13.500 21.500 22 13M1.500 22V25A3.500 3.500 0 0 0 5 28.500H22A3.500 3.500 0 0 0 25.500 25V22" stroke="#fbfbfe" stroke-width="2.400"/>`)],
                [69, box(28, 28, "0 0 28 28", svg`<path d="M2.500 25.500 17 11" stroke="#fbfbfe" stroke-width="4.500" stroke-linecap="round"/><path d="M22 0 18 5V10H23L28 6C28 13 22 16 16 13C11 8 16 0 22 0Z" fill="#fbfbfe"/>`)],
                [75, box(40, 44, "0 -6 40 44", svg`<circle cx="16" cy="16" r="14.500" stroke="#fbfbfe" stroke-width="2.600"/><circle cx="16" cy="12.500" r="5" fill="#fbfbfe"/><path d="M7 20H25C25 28 7 28 7 20Z" fill="#fbfbfe"/><circle cx="31" cy="1" r="6" fill="#4db2f7" stroke="#1d4c70" stroke-width="2"/>`)],
                [74, box(28, 32, "0 0 28 32", svg`<path d="M2 8.500H9V5.500A4.500 4.500 0 0 1 18 5.500V8.500H24A2.500 2.500 0 0 1 26.500 11V28A2.500 2.500 0 0 1 24 30.500H4.500A2.500 2.500 0 0 1 2 28V23H5.500A4 4 0 0 0 5.500 15H2Z" stroke="#fbfbfe" stroke-width="2.500" stroke-linejoin="round"/>`)],
                [25, box(24, 20, "0 0 24 20", svg`<path d="M0 1.500H24M0 10H24M0 18.500H24" stroke="#fbfbfe" stroke-width="2.400"/>`)],
              ])}
            </div>
          </div>
          <div class="marks">
            ${BOOKMARKS.map(([w, ic, label, tw, gap]) => html`
              <div class="mark" style=${styleMap({ width: `${w}px`, gap: `${gap}px` })}>${ic}${t(label, tw)}</div>`)}
            ${box(26, 24, "0 0 26 24", svg`<path d="M1.500 1 12 12 1.500 23M13.500 1 24 12 13.500 23" stroke="#fbfbfe" stroke-width="2.400"/>`)}
            <div class="other">${folder}</div>
            ${t("Other Bookmarks", 182)}
          </div>
        </div>

        <div class="banner">
          <div class="msg">
            ${t("This is a temporary development preview, and these links are not for public use.", 1030)}
            ${t("Deploy your app", 215, "link")}
            ${t("for secure sharing or use an invite link.", 499)}
          </div>
          ${icon(I.close, 24, "", 2)}
        </div>

        <div class="top">
          ${icon(I.sandwich, 60, "logo")}
          <div class="title">${t("The Sandwich Project", 405)}</div>
          ${icon(I.message, 45)}
          <div class="out">${icon(I.logout, 36)}${t("Logout", 99)}</div>
        </div>

        <div class="page">
          <div class="side">
            ${NAV_TOP.map((n) => this.nav(n))}
            <div class="sub">
              ${NAV_SUB.map(([ic, label, w], i) => html`<div class="snav ${i === 0 ? "on" : ""}">${icon(I[ic], 36)}${t(label, w)}</div>`)}
            </div>
            ${NAV_END.map((n) => this.nav(n))}
          </div>
          <div class="main">
            <div class="btn back">${icon(I.left, 36)}${t("Back to Projects", 239)}</div>
            <div class="head">
              <div>
                <div class="desc">${t("No description provided", 388)}</div>
                <div class="pills"><div class="pill">${t("priority", 96)}</div><div class="pill empty"></div></div>
              </div>
              <div class="acts">
                <div class="btn edit">${icon(I.pen, 36)}${t("Edit Project", 170)}</div>
                <div class="btn update">${icon(I.target, 36)}${t("Update Progress", 246)}</div>
              </div>
            </div>
            <div class="prow">${t("Project Progress", 237)}${t("0%", 47)}</div>
            <div class="track"></div>
            <div class="tablist">
              <div class="tl on">${t("Tasks", 82)}</div>
              <div class="tl">${t("Details", 101)}</div>
              <div class="tl">${t("Files", 67)}</div>
              <div class="tl">${t("Activity", 110)}</div>
            </div>
            <div class="tasks">
              ${t("Tasks", 117, "h")}
              <div class="add">${icon(I.plus, 36)}${t("Add Task", 134)}</div>
            </div>
            <div class="empty-state">
              ${icon(I.todo, 108)}
              <div class="t1">${t("No tasks yet", 225)}</div>
              <div class="t2">${t("Create your first task using the Add Task button above.", 888)}</div>
            </div>
          </div>
        </div>
        <div class="toast">${t("Task created", 192, "tt")}${t("The task has been added to the project.", 573)}</div>
        <div class="dockshade"></div>
      </div>

      <div class="dock">
        ${APPS_A.map(app)}<div class="dsep"></div>${APPS_B.map(app)}<div class="dsep"></div>${APPS_C.map(app)}
      </div>
    `;
  }

  private nav([ic, label, w, chev]: [keyof typeof I, string, number, string]) {
    return html`<div class="nav">
      ${icon(I[ic], 45, "lead")}${t(label, w)}
      ${chev ? icon(I[chev as keyof typeof I], 36, "chev") : nothing}
    </div>`;
  }
}
